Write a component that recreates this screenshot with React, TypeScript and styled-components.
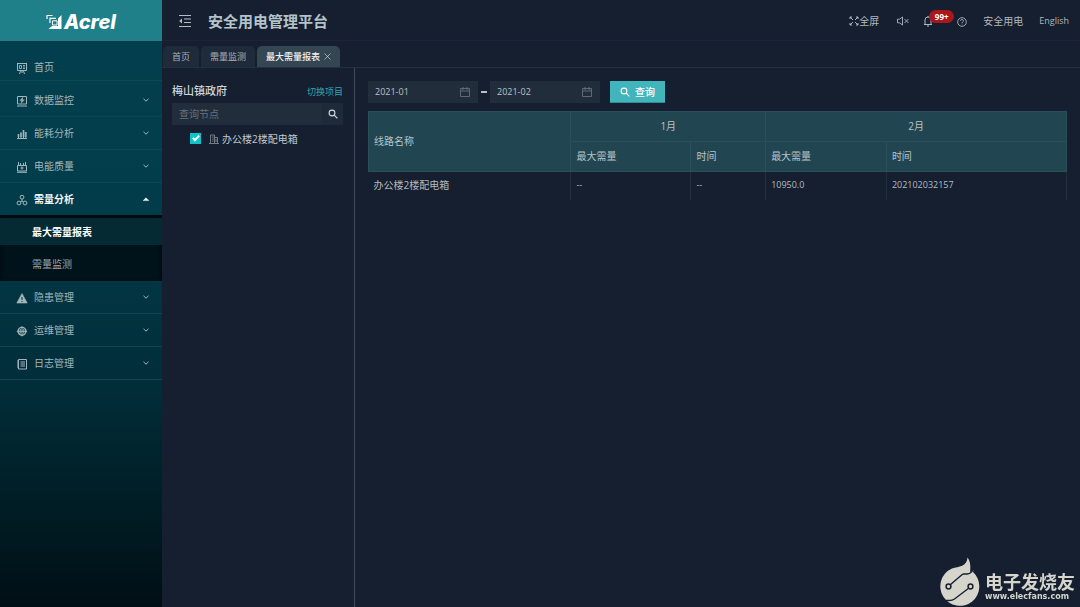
import React, { useState } from "react";
import styled, { createGlobalStyle, css } from "styled-components";

const GlobalStyle = createGlobalStyle`
  *, *::before, *::after { box-sizing: border-box; }
  body {
    margin: 0;
    background: #151f30;
    color: #b4bcc2;
    font-family: "Open Sans", "Noto Sans CJK SC", sans-serif;
    font-size: 10px;
    line-height: 14px;
  }
  button, input { font: inherit; color: inherit; }
  button { border: 0; padding: 0; background: none; cursor: pointer; }
  a { color: inherit; text-decoration: none; }
  ul { list-style: none; margin: 0; padding: 0; }
  svg { display: block; flex: none; }
`;

const Page = styled.div`
  display: flex;
  min-height: 100vh;
`;

const Sidebar = styled.aside`
  flex: none;
  width: 162px;
  background: linear-gradient(#023f4e 0, #023d4b 30%, #012d39 64%, #001e26 82%, #000f15 100%);
`;

const Brand = styled.a`
  display: flex;
  align-items: center;
  justify-content: center;
  gap: 2px;
  height: 41px;
  padding-top: 3px;
  background: #20808a;
  border-bottom: 1px solid #2b7c87;
  color: #fff;
`;

const BrandName = styled.span`
  font: italic 800 20px/24px Inter, "Liberation Sans", sans-serif;
`;

const Menu = styled.ul`
  && { padding-top: 13px; }
`;

const MenuItem = styled.li<{ $home?: boolean; $open?: boolean }>`
  border-bottom: ${(p) => (p.$open ? "0" : "1px solid #0b4856")};
  ${(p) => p.$home && css`margin-bottom: 3px;`}
`;

const MenuButton = styled.button<{ $active?: boolean; $home?: boolean }>`
  display: flex;
  align-items: center;
  gap: 6px;
  width: 100%;
  height: ${(p) => (p.$home ? 26 : 32)}px;
  padding: 0 12px 0 16px;
  text-align: left;
  color: ${(p) => (p.$active ? "#f2f6f6" : "#a3b6bb")};
  font-weight: ${(p) => (p.$active ? 700 : 400)};

  > svg:first-child {
    position: relative;
    top: 1px;
    color: #a3b6bb;
  }
`;

const MenuLabel = styled.span`
  flex: 1;
`;

const SubMenu = styled.ul`
  && { padding-top: 3px; }
  background: #00121a;
  box-shadow: inset 0 2px 5px #00080c;
`;

const SubLink = styled.a<{ $active?: boolean }>`
  display: flex;
  align-items: center;
  height: ${(p) => (p.$active ? 27 : 36)}px;
  padding: ${(p) => (p.$active ? 0 : 2)}px 0 0 32px;
  background: ${(p) => (p.$active ? "#052a33" : "transparent")};
  color: ${(p) => (p.$active ? "#fff" : "#9ba6aa")};
  font-weight: ${(p) => (p.$active ? 700 : 400)};
`;

const Content = styled.div`
  flex: 1;
  min-width: 0;
  display: flex;
  flex-direction: column;
`;

const Header = styled.header`
  display: flex;
  align-items: center;
  height: 41px;
  padding: 2px 11px 0 16px;
  border-bottom: 1px solid #23203b;
`;

const Title = styled.h1`
  flex: 1;
  margin: 0 0 0 16px;
  font-size: 15px;
  line-height: 20px;
  font-weight: 700;
  color: #b3c3ca;
`;

const Tools = styled.div`
  display: flex;
  align-items: center;
  gap: 16px;
  color: #b0b8be;
`;

const Tool = styled.button`
  position: relative;
  display: flex;
  align-items: center;
`;

const Language = styled(Tool)`
  font-size: 9px;
`;

const Bell = styled(Tool)`
  margin: 0 8px 0 -4px;
`;

const Badge = styled.span`
  position: absolute;
  left: 6px;
  top: -5px;
  width: 25px;
  height: 13px;
  border-radius: 7px;
  background: #a9161c;
  color: #fff;
  font-size: 8px;
  line-height: 13px;
  font-weight: 700;
  text-align: center;
`;

const Tabs = styled.nav`
  display: flex;
  align-items: flex-end;
  gap: 2px;
  height: 27px;
  padding-left: 1px;
  border-bottom: 1px solid #25303e;
`;

const Tab = styled.a<{ $active?: boolean }>`
  display: flex;
  align-items: center;
  gap: 4px;
  height: 21px;
  padding: 0 9px;
  border-radius: 5px 5px 0 0;
  background: ${(p) => (p.$active ? "#334652" : "#1f2a3a")};
  color: ${(p) => (p.$active ? "#eef1f2" : "#aab2b8")};
  font-weight: ${(p) => (p.$active ? 500 : 400)};
  font-size: 9px;
`;

const Workspace = styled.div`
  flex: 1;
  display: flex;
`;

const TreePanel = styled.section`
  flex: none;
  width: 193px;
  padding: 14px 11px 0 10px;
  border-right: 1px solid #414a57;
`;

const TreeHead = styled.div`
  display: flex;
  align-items: center;
  justify-content: space-between;
  height: 18px;
  margin-bottom: 3px;
`;

const Project = styled.h2`
  margin: 0;
  font-size: 11px;
  line-height: 16px;
  font-weight: 500;
  color: #ced5d9;
`;

const SwitchLink = styled.a`
  font-size: 9px;
  padding-top: 2px;
  color: #2fa5ae;
`;

const SearchBox = styled.form`
  display: flex;
  height: 22px;
  background: #222d3c;
`;

const SearchInput = styled.input`
  flex: 1;
  min-width: 0;
  padding: 0 0 0 7px;
  border: 0;
  outline: 0;
  background: transparent;
  &::placeholder { color: #66717e; opacity: 1; }
`;

const SearchButton = styled.button`
  display: grid;
  place-items: center;
  width: 21px;
  background: #1e2939;
  color: #d4d9dc;
`;

const Node = styled.label`
  display: flex;
  align-items: center;
  height: 27px;
  padding-left: 18px;
  color: #c3c9ce;

  svg { margin: 0 3px 0 8px; color: #7d8790; }
`;

const Check = styled.input`
  appearance: none;
  width: 11px;
  height: 11px;
  margin: 0;
  background: #35424f;
  &:checked {
    background: #0fc3cb;
  }
  &:checked::after {
    content: "";
    display: block;
    width: 4px;
    height: 7px;
    margin: 1px 0 0 4px;
    border: solid #fff;
    border-width: 0 2px 2px 0;
    transform: rotate(45deg);
  }
`;

const Main = styled.main`
  flex: 1;
  min-width: 0;
  padding: 13px 13px 0 13px;
`;

const Filters = styled.form`
  display: flex;
  align-items: center;
  margin-bottom: 8px;
`;

const DateField = styled.label`
  display: flex;
  align-items: center;
  width: 110px;
  height: 22px;
  padding: 0 8px 0 7px;
  background: #222d3c;
  color: #b9c1c6;
  svg { color: #66707b; }
`;

const DateInput = styled.input`
  flex: 1;
  min-width: 0;
  padding: 0;
  border: 0;
  outline: 0;
  background: transparent;
  font-size: 9px;
`;

const Dash = styled.span`
  width: 6px;
  height: 2px;
  margin: 0 3px;
  background: #b9bfc4;
`;

const QueryButton = styled.button`
  display: flex;
  align-items: center;
  justify-content: center;
  gap: 5px;
  width: 55px;
  height: 22px;
  margin-left: 10px;
  background: #41b4bc;
  border-bottom: 1px solid #2f8d97;
  color: #fff;
  font-weight: 500;
`;

const Report = styled.table`
  width: 100%;
  table-layout: fixed;
  border-collapse: collapse;
  font-size: 9px;
  color: #b3bbc0;

  th, td {
    height: 30px;
    padding: 0 5px 2px;
    font-weight: 400;
    text-align: left;
    border: 1px solid #2a4f5b;
  }
  th { background: #214652; color: #b7c3c8; font-size: 10px; }
  th[scope="colgroup"] { text-align: center; }
  td {
    height: 28px;
    border-color: #222e3d;
    border-width: 0 1px;
  }
  td:first-child { border-left: 0; font-size: 10px; }
`;

const Watermark = styled.a`
  position: fixed;
  right: 5px;
  bottom: 0;
  display: flex;
  align-items: flex-end;
  gap: 5px;
  color: #d5d5cb;
`;

const WatermarkText = styled.span`
  display: flex;
  flex-direction: column;
  padding-bottom: 4px;
  font-weight: 700;
`;

const WatermarkName = styled.span`
  font-size: 18px;
  line-height: 18px;
`;

const WatermarkUrl = styled.span`
  font: 700 8px/12px "DejaVu Sans", sans-serif;
`;

type GlyphProps = { w?: number; h?: number; children: React.ReactNode };

const Glyph = ({ w = 12, h = 12, children }: GlyphProps) => (
  <svg width={w} height={h} viewBox={`0 0 ${w} ${h}`} fill="none" stroke="currentColor" aria-hidden="true">
    {children}
  </svg>
);

const icons = {
  home: (
    <Glyph>
      <path d="M1 1.500h10M1.500 1.500v7h9v-7M3.500 12l1-3M8.500 12l-1-3M6 9v2" />
      <path d="M3.500 3.500h2v3h-2zM7 3.500h2M7 5h2M7 6.500h2" strokeWidth=".9" />
    </Glyph>
  ),
  data: (
    <Glyph>
      <path d="M1.500 1.500h9v7.500h-9zM1 11h10" />
      <path d="M6.800 2.300 3.800 5.600h1.800L5.200 8.300 8.400 4.800H6.400z" fill="currentColor" strokeWidth=".4" />
    </Glyph>
  ),
  bars: (
    <Glyph>
      <path d="M1 10.500h10M2.500 10V6M5 10V4.500M7.500 10V2M9.800 10V4" />
      <path d="M2.500 9V6M5 9V4.500M7.500 9V2M9.800 9V4" strokeWidth="2" opacity=".6" />
    </Glyph>
  ),
  quality: (
    <Glyph>
      <path d="M1.500 4.500h9v5.500h-9zM1 11.300h10M2.500 1v3M4.500 2v2M7.500 2v2M9.500 1v3" />
      <path d="M6 5.500v3M4.500 7h3" />
    </Glyph>
  ),
  demand: (
    <Glyph>
      <circle cx="6" cy="3.200" r="1.900" />
      <circle cx="3" cy="9" r="1.900" />
      <circle cx="9" cy="9" r="1.900" />
      <path d="M6 5v2M6 7l-1.500 1M6 7l1.500 1" />
    </Glyph>
  ),
  warning: (
    <Glyph>
      <path d="M6 1.500 11.200 11H.8z" fill="currentColor" strokeWidth=".6" strokeLinejoin="round" />
      <path d="M6 5v3M6 9v1" stroke="#02333f" />
    </Glyph>
  ),
  ops: (
    <Glyph>
      <circle cx="6" cy="6.300" r="3.900" strokeWidth="1.400" />
      <path d="M6 1.300v10M.8 6.300h10.400M4.200 4v4.600M7.800 4v4.600" />
    </Glyph>
  ),
  log: (
    <Glyph>
      <path d="M2.500 1.500h8v9.500h-8zM1 3h1.500M1 5h1.500M1 7h1.500M1 9h1.500M4.500 4h4.500M4.500 6h4.500M4.500 8h4.500" />
    </Glyph>
  ),
};

const Chevron = ({ up }: { up?: boolean }) => (
  <Glyph w={8} h={8}>
    {up ? (
      <path d="M1.200 5.600 4 2.800l2.800 2.800z" fill="currentColor" strokeWidth=".5" />
    ) : (
      <path d="m1.500 2.800 2.500 2.400 2.500-2.400" />
    )}
  </Glyph>
);

const Lens = () => (
  <Glyph w={10} h={10}>
    <circle cx="4" cy="4" r="2.900" strokeWidth="1.100" />
    <path d="m6.200 6.200 3.200 3.200" strokeWidth="1.200" />
  </Glyph>
);

const Calendar = () => (
  <Glyph w={10} h={10}>
    <path d="M.5 1.500h9v8h-9zM.5 4h9M3 0v3M7 0v3" strokeWidth=".9" />
  </Glyph>
);

type Entry = {
  label: string;
  icon: keyof typeof icons;
  home?: boolean;
  children?: string[];
};

const entries: Entry[] = [
  { label: "首页", icon: "home", home: true },
  { label: "数据监控", icon: "data" },
  { label: "能耗分析", icon: "bars" },
  { label: "电能质量", icon: "quality" },
  { label: "需量分析", icon: "demand", children: ["最大需量报表", "需量监测"] },
  { label: "隐患管理", icon: "warning" },
  { label: "运维管理", icon: "ops" },
  { label: "日志管理", icon: "log" },
];

export default function App() {
  const [from, setFrom] = useState("2021-01");
  const [to, setTo] = useState("2021-02");
  const [checked, setChecked] = useState(true);

  return (
    <>
      <GlobalStyle />
      <Page>
        <Sidebar>
          <Brand href="#">
            <Glyph w={16} h={16}>
              <path d="M1 5V1.500h5.500" strokeWidth="1.200" />
              <path d="M4 9V4.300h6" strokeWidth="1.200" />
              <path d="M6.500 6.800h4.500v4.200H6.500z" strokeWidth="1" />
              <path d="M15.500 1v14H2.500l3.500-3h6V4.500z" fill="currentColor" stroke="none" />
            </Glyph>
            <BrandName>Acrel</BrandName>
          </Brand>
          <nav>
            <Menu>
              {entries.map((e) => (
                <MenuItem key={e.label} $home={e.home} $open={!!e.children}>
                  <MenuButton $home={e.home} $active={!!e.children}>
                    {icons[e.icon]}
                    <MenuLabel>{e.label}</MenuLabel>
                    {!e.home && <Chevron up={!!e.children} />}
                  </MenuButton>
                  {e.children && (
                    <SubMenu>
                      {e.children.map((c, i) => (
                        <li key={c}>
                          <SubLink href="#" $active={i === 0}>{c}</SubLink>
                        </li>
                      ))}
                    </SubMenu>
                  )}
                </MenuItem>
              ))}
            </Menu>
          </nav>
        </Sidebar>
        <Content>
          <Header>
            <Tool aria-label="收起菜单">
              <Glyph w={14} h={12}>
                <path d="M1 .5h12M6 4h7M6 7.500h7M1 11.500h12" />
                <path d="M4 3.500v5L1.200 6z" fill="currentColor" stroke="none" />
              </Glyph>
            </Tool>
            <Title>安全用电管理平台</Title>
            <Tools>
              <Tool>
                <Glyph w={10} h={10}>
                  <path d="M1 3V1h2M7 1h2v2M9 7v2H7M3 9H1V7M1 1l3 3M9 1 6 4M9 9 6 6M1 9l3-3" />
                </Glyph>
                全屏
              </Tool>
              <Tool aria-label="静音">
                <Glyph w={16} h={10}>
                  <path d="M2.500 3.200h2L7.500 1v8L4.500 6.800h-2zM9.500 3l4 4M13.500 3l-4 4" strokeWidth=".9" />
                </Glyph>
              </Tool>
              <Bell aria-label="消息">
                <Glyph w={10} h={12}>
                  <path d="M1 9.500h8M2 9.500V5a3 3 0 0 1 6 0v4.500M5 1v1M4 11h2" />
                </Glyph>
                <Badge>99+</Badge>
              </Bell>
              <Tool aria-label="帮助">
                <Glyph w={10} h={12}>
                  <circle cx="5" cy="7" r="4.300" strokeWidth=".9" />
                  <path d="M3.600 5.900a1.400 1.400 0 1 1 2 1.200c-.4.200-.6.400-.6.900M5 8.600v.8" strokeWidth=".9" />
                </Glyph>
              </Tool>
              <Tool>安全用电</Tool>
              <Language>English</Language>
            </Tools>
          </Header>
          <Tabs>
            <Tab href="#">首页</Tab>
            <Tab href="#">需量监测</Tab>
            <Tab href="#" $active>
              最大需量报表
              <Glyph w={7} h={7}>
                <path d="m.5.5 6 6M6.500.5l-6 6" strokeWidth=".8" opacity=".7" />
              </Glyph>
            </Tab>
          </Tabs>
          <Workspace>
            <TreePanel>
              <TreeHead>
                <Project>梅山镇政府</Project>
                <SwitchLink href="#">切换项目</SwitchLink>
              </TreeHead>
              <SearchBox onSubmit={(e) => e.preventDefault()}>
                <SearchInput placeholder="查询节点" aria-label="查询节点" />
                <SearchButton aria-label="查询"><Lens /></SearchButton>
              </SearchBox>
              <Node>
                <Check type="checkbox" checked={checked} onChange={(e) => setChecked(e.target.checked)} />
                <Glyph w={10} h={10}>
                  <path d="M1.500 9V1h4v8M5.500 3.500h3V9M0 9.500h10M3 3h1.500M3 5h1.500M3 7h1.500M7 5v3" strokeWidth=".9" />
                </Glyph>
                办公楼2楼配电箱
              </Node>
            </TreePanel>
            <Main>
              <Filters onSubmit={(e) => e.preventDefault()}>
                <DateField>
                  <DateInput aria-label="开始月份" value={from} onChange={(e) => setFrom(e.target.value)} />
                  <Calendar />
                </DateField>
                <Dash />
                <DateField>
                  <DateInput aria-label="结束月份" value={to} onChange={(e) => setTo(e.target.value)} />
                  <Calendar />
                </DateField>
                <QueryButton>
                  <Lens />
                  查询
                </QueryButton>
              </Filters>
              <Report>
                <colgroup>
                  <col style={{ width: "29%" }} />
                  <col style={{ width: "17.2%" }} />
                  <col style={{ width: "10.7%" }} />
                  <col style={{ width: "17.3%" }} />
                  <col />
                </colgroup>
                <thead>
                  <tr>
                    <th scope="col" rowSpan={2}>线路名称</th>
                    <th scope="colgroup" colSpan={2}>1月</th>
                    <th scope="colgroup" colSpan={2}>2月</th>
                  </tr>
                  <tr>
                    <th scope="col">最大需量</th>
                    <th scope="col">时间</th>
                    <th scope="col">最大需量</th>
                    <th scope="col">时间</th>
                  </tr>
                </thead>
                <tbody>
                  <tr>
                    <td>办公楼2楼配电箱</td>
                    <td>--</td>
                    <td>--</td>
                    <td>10950.0</td>
                    <td>202102032157</td>
                  </tr>
                </tbody>
              </Report>
            </Main>
          </Workspace>
        </Content>
      </Page>
      <Watermark href="#">
        <Glyph w={40} h={50}>
          <path d="M27.500.5C31 5 30.500 11 30 15l4-2c-1 1-1 1.500-1 2A19.500 19.500 0 1 1 12 11.500C19 9.500 27 9.500 27.500.5z" fill="currentColor" stroke="none" />
          <path d="M10 28 21 18.500c1-1 2-1.500 3-1.500h3c3 0 5-2 6.500-5M29 31 14.500 42c-1.500 1-3 1.500-5 1.500H5" stroke="#151f30" strokeWidth="1.400" />
          <circle cx="8.500" cy="29.500" r="2.400" fill="currentColor" stroke="#151f30" strokeWidth="1.500" />
          <circle cx="30.500" cy="29.500" r="2.400" fill="currentColor" stroke="#151f30" strokeWidth="1.500" />
        </Glyph>
        <WatermarkText>
          <WatermarkName>电子发烧友</WatermarkName>
          <WatermarkUrl>www.elecfans.com</WatermarkUrl>
        </WatermarkText>
      </Watermark>
    </>
  );
}
